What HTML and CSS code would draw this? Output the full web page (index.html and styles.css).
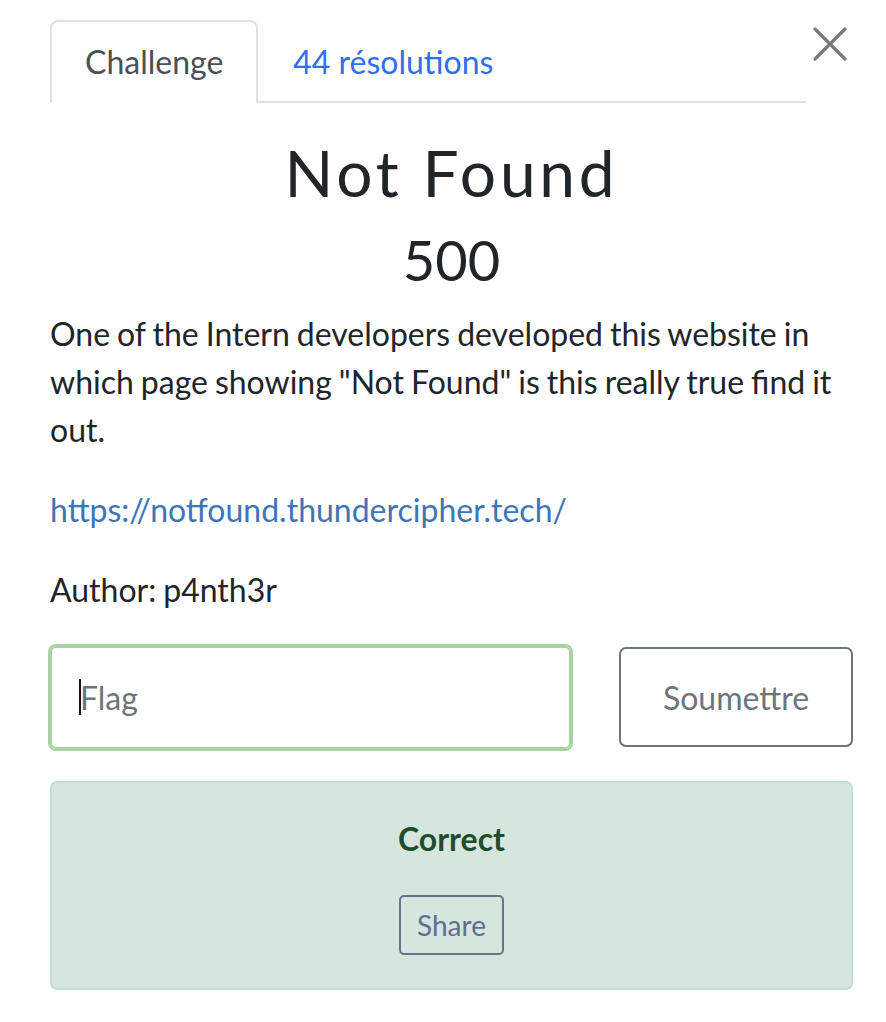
FILE: index.html
```html
<!DOCTYPE html>
<html lang="fr">
<head>
<meta charset="utf-8">
<title>Not Found</title>
<link rel="stylesheet" href="styles.css">
</head>
<body>
<div class="modal">
  <div class="header">
    <ul class="tabs">
      <li class="tab active">Challenge</li>
      <li class="tab link">44 résolutions</li>
    </ul>
    <button class="close" aria-label="Close">
      <svg width="36" height="36" viewBox="0 0 36 36"><path d="M3 3 L33 33 M33 3 L3 33" stroke="#7a7a7a" stroke-width="3.2" stroke-linecap="round" fill="none"/></svg>
    </button>
  </div>
  <h2 class="title">Not Found</h2>
  <h3 class="value">500</h3>
  <p class="desc">One of the Intern developers developed this website in which page showing "Not Found" is this really true find it out.</p>
  <p class="desc"><a class="url" href="#">https://notfound.thundercipher.tech/</a></p>
  <p class="desc">Author: p4nth3r</p>
  <div class="submit-row">
    <div class="flag-input"><span class="caret"></span><span class="placeholder">Flag</span></div>
    <button class="submit">Soumettre</button>
  </div>
  <div class="alert">
    <strong class="result">Correct</strong>
    <button class="share">Share</button>
  </div>
</div>
</body>
</html>
```

FILE: styles.css
```css
* { box-sizing: border-box; }
html, body { margin: 0; padding: 0; background: #fff; }
body {
  font-family: "Lato", "Open Sans", sans-serif;
  color: #212529;
}
.modal {
  padding: 20px 33px 30px 50px;
}
.header {
  display: flex;
  align-items: flex-start;
}
.tabs {
  flex: 1;
  display: flex;
  list-style: none;
  margin: 0;
  padding: 0;
  border-bottom: 2px solid #dee2e6;
}
.tab {
  font-size: 32px;
  line-height: 48px;
  padding: 16px 33px 17px 33px;
  border: 2px solid transparent;
  border-bottom: none;
  margin-bottom: -2px;
}
.tab.active {
  color: #495057;
  border-color: #dee2e6;
  border-radius: 8px 8px 0 0;
  background: #fff;
}
.tab.link {
  color: #2f6ff0;
}
.close {
  width: 47px;
  height: 60px;
  padding: 0;
  border: none;
  background: none;
  display: flex;
  justify-content: center;
  align-items: center;
  margin-top: -6px;
}
.title {
  font-size: 64px;
  font-weight: 400;
  line-height: 1.2;
  letter-spacing: 3.8px;
  text-align: center;
  margin: 32px 0 0 0;
}
.value {
  font-size: 56px;
  font-weight: 400;
  line-height: 1.2;
  text-align: center;
  margin: 14px 0 0 0;
}
.desc {
  font-size: 32px;
  line-height: 48px;
  word-spacing: -1.2px;
  margin: 17px 0 0 0;
}
.desc + .desc { margin-top: 32px; }
.url {
  color: #3e75b6;
  text-decoration: none;
}
.submit-row {
  display: flex;
  align-items: center;
  gap: 48px;
  margin-top: 32px;
}
.flag-input {
  flex: 0 0 521px;
  height: 103px;
  border: 2px solid #a8d2a0;
  box-shadow: 0 0 0 2px #a8d2a0;
  border-radius: 6px;
  display: flex;
  align-items: center;
  padding-left: 27px;
  font-size: 32px;
}
.caret {
  width: 2px;
  height: 36px;
  background: #111;
  margin-right: -1px;
}
.placeholder { color: #6c757d; }
.submit {
  flex: 1;
  height: 100px;
  border: 2px solid #6c757d;
  border-radius: 7px;
  background: #fff;
  font-family: inherit;
  font-size: 32px;
  color: #6c757d;
}
.alert {
  margin-top: 32px;
  height: 209px;
  background: #d4e6dd;
  border: 2px solid #c3dfd0;
  border-radius: 7px;
  display: flex;
  flex-direction: column;
  align-items: center;
  padding-top: 32px;
}
.result {
  font-size: 32px;
  font-weight: 700;
  color: #1f4d2d;
  line-height: 48px;
}
.share {
  margin-top: 32px;
  width: 105px;
  height: 60px;
  border: 2px solid #66738f;
  border-radius: 5px;
  background: transparent;
  font-family: inherit;
  font-size: 28px;
  color: #5f6f8c;
}
```
